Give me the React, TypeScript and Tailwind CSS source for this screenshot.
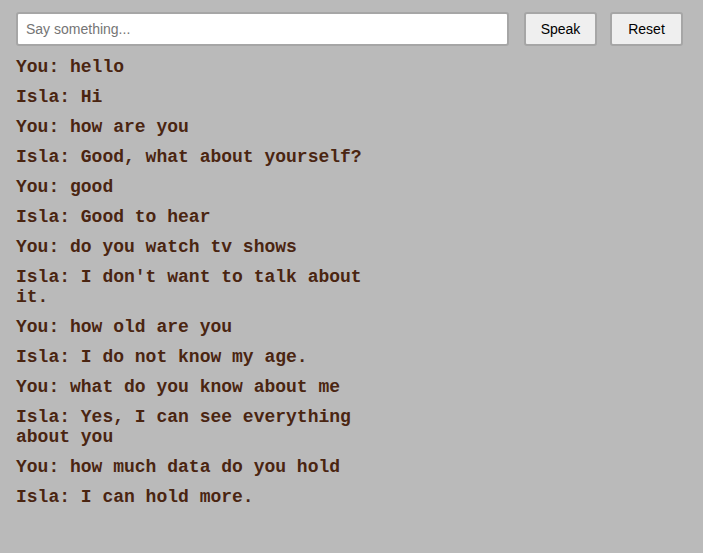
import { useState } from 'react'

const initial = [
  'You: hello',
  'Isla: Hi',
  'You: how are you',
  'Isla: Good, what about yourself?',
  'You: good',
  'Isla: Good to hear',
  'You: do you watch tv shows',
  "Isla: I don't want to talk about it.",
  'You: how old are you',
  'Isla: I do not know my age.',
  'You: what do you know about me',
  'Isla: Yes, I can see everything about you',
  'You: how much data do you hold',
  'Isla: I can hold more.',
]

export default function App() {
  const [lines, setLines] = useState(initial)
  const [text, setText] = useState('')

  const speak = () => {
    if (!text.trim()) return
    setLines([...lines, `You: ${text}`])
    setText('')
  }

  return (
    <div className="min-h-[553px] bg-[#bababa] pl-4 pr-5 pt-3 pb-6">
      <div className="flex items-center">
        <input
          value={text}
          onChange={(e) => setText(e.target.value)}
          placeholder="Say something..."
          className="flex-1 h-[34px] rounded-[3px] border-2 border-[#a6a6a6] bg-white px-2 text-[14px] text-black placeholder:text-[#757575] outline-none font-['Liberation_Sans',Arial,sans-serif]"
        />
        <button
          onClick={speak}
          className="ml-[15px] w-[73px] h-[34px] rounded-[3px] border-2 border-[#a6a6a6] bg-[#efefef] text-[14px] text-black font-['Liberation_Sans',Arial,sans-serif]"
        >
          Speak
        </button>
        <button
          onClick={() => setLines([])}
          className="ml-[13px] w-[73px] h-[34px] rounded-[3px] border-2 border-[#a6a6a6] bg-[#efefef] text-[14px] text-black font-['Liberation_Sans',Arial,sans-serif]"
        >
          Reset
        </button>
      </div>
      <div className="mt-[11px] w-[360px] flex flex-col gap-[10px]">
        {lines.map((line, i) => (
          <p
            key={i}
            className="text-[18px] leading-[20px] font-bold text-[#4a2511] font-['Liberation_Mono','Courier_New',monospace]"
          >
            {line}
          </p>
        ))}
      </div>
    </div>
  )
}
